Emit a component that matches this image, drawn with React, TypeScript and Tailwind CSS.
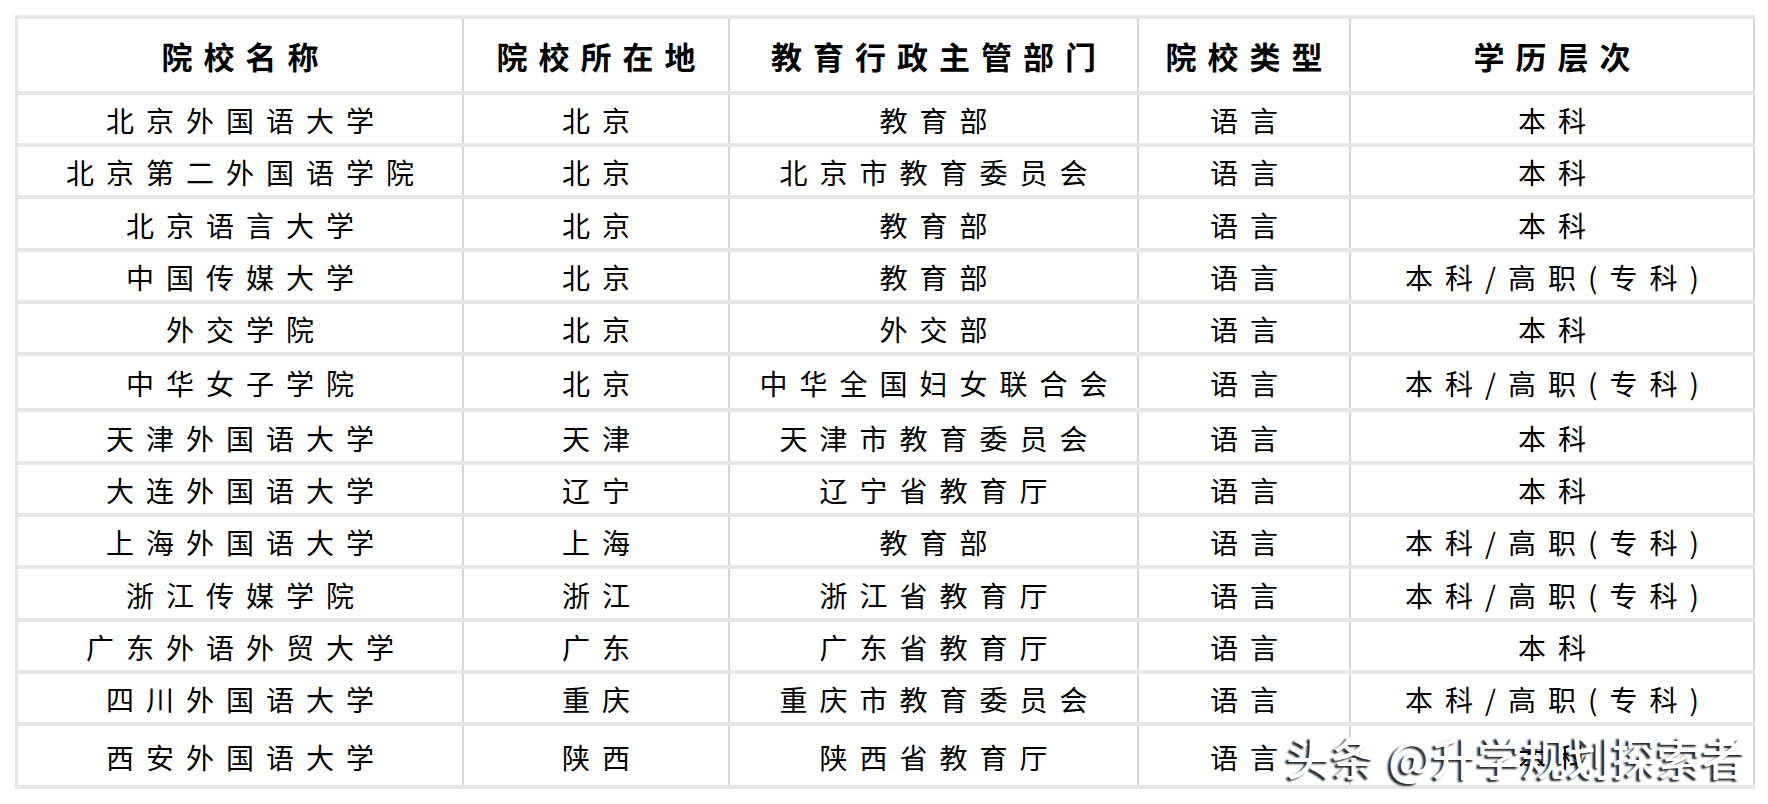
import React from 'react';

interface School {
  name: string;
  city: string;
  dept: string;
  kind: string;
  level: string;
  h: string;
}

const headers = ['院校名称', '院校所在地', '教育行政主管部门', '院校类型', '学历层次'];

// h includes the 4px bottom band (border-box)
const schools: School[] = [
  { name: '北京外国语大学', city: '北京', dept: '教育部', kind: '语言', level: '本科', h: 'h-[52px]' },
  { name: '北京第二外国语学院', city: '北京', dept: '北京市教育委员会', kind: '语言', level: '本科', h: 'h-[52px]' },
  { name: '北京语言大学', city: '北京', dept: '教育部', kind: '语言', level: '本科', h: 'h-[53px]' },
  { name: '中国传媒大学', city: '北京', dept: '教育部', kind: '语言', level: '本科/高职(专科)', h: 'h-[52px]' },
  { name: '外交学院', city: '北京', dept: '外交部', kind: '语言', level: '本科', h: 'h-[52px]' },
  { name: '中华女子学院', city: '北京', dept: '中华全国妇女联合会', kind: '语言', level: '本科/高职(专科)', h: 'h-[56px]' },
  { name: '天津外国语大学', city: '天津', dept: '天津市教育委员会', kind: '语言', level: '本科', h: 'h-[53px]' },
  { name: '大连外国语大学', city: '辽宁', dept: '辽宁省教育厅', kind: '语言', level: '本科', h: 'h-[52px]' },
  { name: '上海外国语大学', city: '上海', dept: '教育部', kind: '语言', level: '本科/高职(专科)', h: 'h-[52px]' },
  { name: '浙江传媒学院', city: '浙江', dept: '浙江省教育厅', kind: '语言', level: '本科/高职(专科)', h: 'h-[53px]' },
  { name: '广东外语外贸大学', city: '广东', dept: '广东省教育厅', kind: '语言', level: '本科', h: 'h-[52px]' },
  { name: '四川外国语大学', city: '重庆', dept: '重庆市教育委员会', kind: '语言', level: '本科/高职(专科)', h: 'h-[52px]' },
  { name: '西安外国语大学', city: '陕西', dept: '陕西省教育厅', kind: '语言', level: '本科', h: 'h-[63px]' },
];

const cols = 'grid grid-cols-[446px_266px_409px_212px_404px]';
const cell = 'flex items-center justify-center border-r-2 border-[#d6d6d6]';

const App = () => {
  return (
    <div
      className="min-h-screen bg-white pl-[15px] pt-[15px] text-black"
      style={{ fontFamily: '"Noto Sans CJK SC", "Noto Sans", sans-serif' }}
    >
      <div className="relative w-max border-l-[3px] border-t-4 border-[#e6e6e6]">
        {/* Header */}
        <div className={`${cols} h-[76px] border-b-4 border-[#e6e6e6]`}>
          {headers.map((h) => (
            <div key={h} className={cell}>
              <span className="pl-[11px] pt-[3px] text-[31px] font-semibold tracking-[11px]">{h}</span>
            </div>
          ))}
        </div>

        {/* Rows */}
        {schools.map((s) => (
          <div key={s.name} className={`${cols} ${s.h} border-b-4 border-[#e6e6e6]`}>
            {[s.name, s.city, s.dept, s.kind, s.level].map((v, i) => (
              <div key={i} className={cell}>
                <span className="pl-[12px] pt-[2px] text-[28px] leading-none tracking-[12px]">{v}</span>
              </div>
            ))}
          </div>
        ))}

        {/* Watermark */}
        <div className="pointer-events-none absolute bottom-[10px] right-[8px] flex items-center gap-[12px] whitespace-nowrap text-[45px] font-medium leading-none text-white [text-shadow:-3px_2px_2px_rgba(0,0,0,0.85)]">
          <span>头条</span>
          <span>@升学规划探索者</span>
        </div>
      </div>
    </div>
  );
};

export default App;
